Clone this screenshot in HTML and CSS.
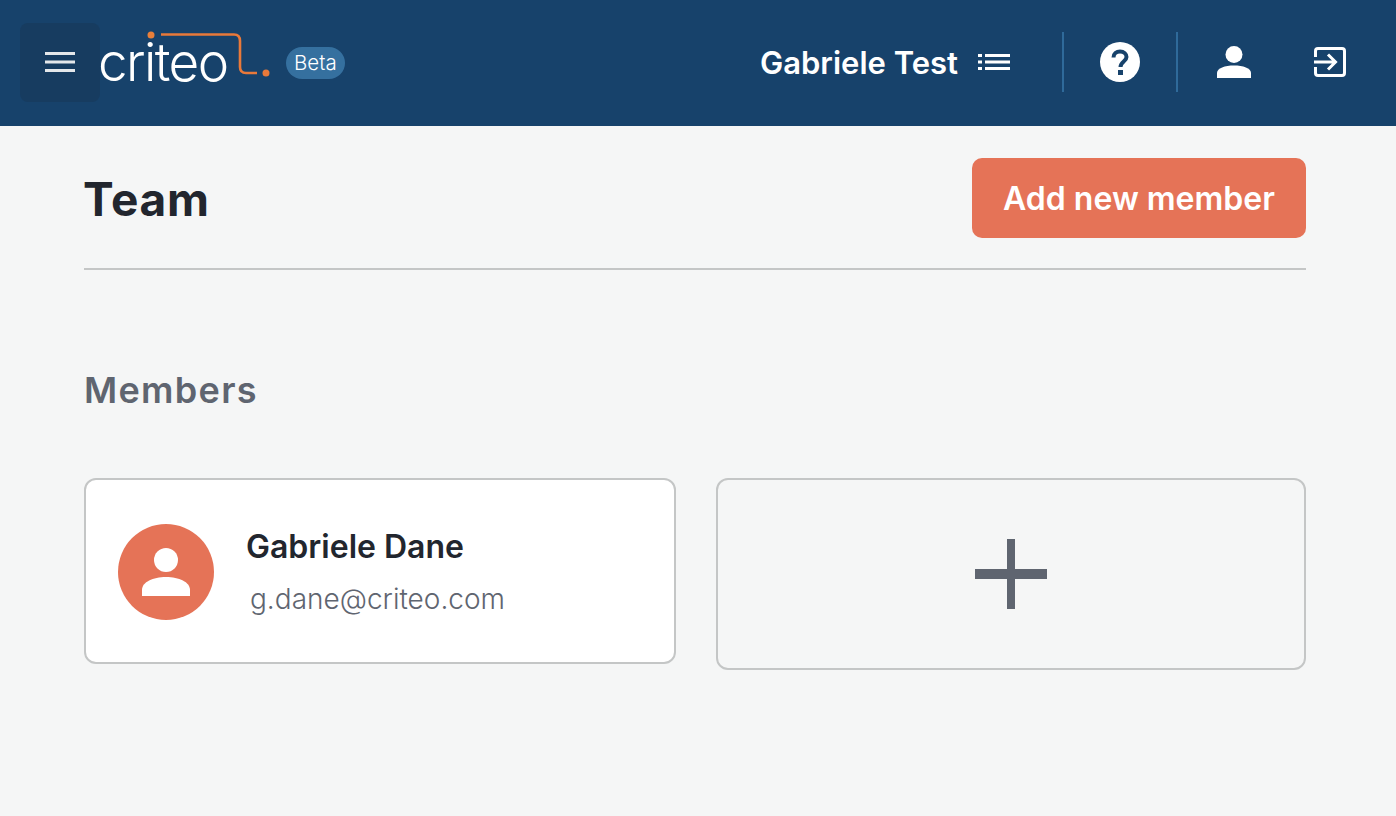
FILE: index.html
```html
<!DOCTYPE html>
<html lang="en">

<head>
    <meta charset="UTF-8">
    <meta name="viewport" content="width=device-width, initial-scale=1.0">
    <title>Team</title>
    <link rel="stylesheet" href="styles.css">
</head>

<body>

    <header class="topbar">
        <div class="brand">
            <button class="menu-button" aria-label="Menu">
                <svg width="30" height="20" viewBox="0 0 30 20" fill="#e4e7ea">
                    <rect x="0" y="0" width="30" height="3"></rect>
                    <rect x="0" y="8.5" width="30" height="3"></rect>
                    <rect x="0" y="17" width="30" height="3"></rect>
                </svg>
            </button>
            <div class="logo">
                <span class="logo-text">criteo</span>
                <svg class="logo-mark" width="176" height="50" viewBox="0 0 176 50" fill="none">
                    <circle cx="51" cy="4" r="3.5" fill="#e97f3a"></circle>
                    <path d="M61 3.5H134Q140 3.500 140 10V36Q140 42 146 42H157" stroke="#e9793a" stroke-width="2.6"></path>
                    <circle cx="166" cy="42" r="3.5" fill="#e9793a"></circle>
                </svg>
            </div>
            <span class="beta">Beta</span>
        </div>
        <div class="user-menu">
            <span class="account-name">Gabriele Test</span>
            <svg class="list-icon" width="32" height="18" viewBox="0 0 32 18" fill="#fff">
                <rect x="0" y="1" width="4" height="3"></rect>
                <rect x="0" y="7.5" width="4" height="3"></rect>
                <rect x="0" y="14" width="4" height="3"></rect>
                <rect x="7" y="1" width="25" height="3"></rect>
                <rect x="7" y="7.5" width="25" height="3"></rect>
                <rect x="7" y="14" width="25" height="3"></rect>
            </svg>
            <span class="sep sep-first"></span>
            <svg class="help-icon" width="40" height="40" viewBox="0 0 40 40">
                <circle cx="20" cy="20" r="20" fill="#fff"></circle>
                <path d="M13.5 15.5C13.5 11.5 16.5 9.5 20 9.5C24 9.5 26.5 12 26.5 15C26.5 19.5 20.5 19.5 20.5 25" fill="none" stroke="#17426b" stroke-width="4"></path>
                <rect x="18" y="28" width="5" height="5" fill="#17426b"></rect>
            </svg>
            <span class="sep sep-second"></span>
            <svg class="person-icon" width="34" height="32" viewBox="0 0 34 32" fill="#fff">
                <circle cx="17" cy="8.5" r="8.5"></circle>
                <path d="M0 32V27C0 22 8 19.5 17 19.5C26 19.5 34 22 34 27V32Z"></path>
            </svg>
            <svg class="exit-icon" width="32" height="30" viewBox="0 0 32 30" fill="none" stroke="#fff" stroke-width="3">
                <path d="M1.5 10V4Q1.5 1.5 4 1.5H28Q30.500 1.5 30.500 4V26Q30.500 28.500 28 28.500H4Q1.500 28.500 1.500 26V20"></path>
                <path d="M0 15H21M14 7.500L21.500 15L14 22.500"></path>
            </svg>
        </div>
    </header>

    <main class="content">
        <div class="page-head">
            <h1>Team</h1>
            <button class="add-button">Add new member</button>
        </div>

        <h2>Members</h2>

        <div class="members">
            <div class="member-card">
                <div class="avatar">
                    <svg width="48" height="48" viewBox="0 0 48 48" fill="#fff">
                        <circle cx="24" cy="12" r="12"></circle>
                        <path d="M0 48V42C0 34 11 29 24 29C37 29 48 34 48 42V48Z"></path>
                    </svg>
                </div>
                <div class="member-info">
                    <div class="member-name">Gabriele Dane</div>
                    <div class="member-email">g.dane@criteo.com</div>
                </div>
            </div>
            <div class="add-card">
                <svg width="72" height="70" viewBox="0 0 72 70" fill="#5f6570">
                    <rect x="0" y="30" width="72" height="10"></rect>
                    <rect x="32" y="0" width="8" height="70"></rect>
                </svg>
            </div>
        </div>
    </main>

</body>

</html>
```

FILE: styles.css
```css
body {
    font-family: Inter, "Open Sans", sans-serif;
    margin: 0;
    padding: 0;
    background: #f5f6f6;
    color: #22262e;
}

.topbar {
    height: 126px;
    background: #17426b;
    display: flex;
    justify-content: space-between;
    align-items: center;
    padding: 0 50px 0 20px;
    box-sizing: border-box;
}

.brand {
    display: flex;
    align-items: center;
    height: 100%;
}

.menu-button {
    width: 80px;
    height: 79px;
    margin-top: -2px;
    border: none;
    border-radius: 8px;
    background: #173c60;
    display: flex;
    align-items: center;
    justify-content: center;
    padding: 0;
}

.logo {
    position: relative;
    width: 186px;
    height: 60px;
    margin-top: -2px;
}

.logo-text {
    color: #fff;
    font-size: 53px;
    font-weight: 350;
    line-height: 60px;
    letter-spacing: -1.6px;
    margin-left: -2px;
    display: block;
}

.logo-mark {
    position: absolute;
    left: 0;
    top: -1px;
}

.beta {
    background: #35709f;
    color: #fff;
    font-size: 20.500px;
    font-weight: 300;
    line-height: 32px;
    padding: 0 8px;
    border-radius: 16px;
}

.user-menu {
    display: flex;
    align-items: center;
    margin-top: -2px;
}

.account-name {
    color: #fff;
    font-size: 31px;
    font-weight: 600;
    margin-right: 20px;
}

.sep {
    width: 2px;
    height: 60px;
    background: #2f6a9a;
}

.sep-first {
    margin: 0 36px 0 52px;
}

.sep-second {
    margin: 0 39px 0 36px;
}

.exit-icon {
    margin-left: 63px;
}

.content {
    padding: 32px 90px 0 84px;
}

.page-head {
    display: flex;
    justify-content: space-between;
    align-items: center;
    padding-bottom: 30px;
    border-bottom: 2px solid #c4c6c6;
}

h1 {
    margin: 1px 0 0 -1px;
    font-size: 46px;
    font-weight: 700;
    letter-spacing: 0.8px;
}

.add-button {
    width: 334px;
    height: 80px;
    background: #e57357;
    color: #fff;
    border: none;
    border-radius: 10px;
    font-family: inherit;
    font-size: 32px;
    font-weight: 600;
    padding: 0;
}

h2 {
    margin: 98px 0 66px;
    font-size: 36px;
    line-height: 44px;
    font-weight: 600;
    letter-spacing: 1.3px;
    color: #5f6570;
}

.members {
    display: grid;
    grid-template-columns: 592px 590px;
    gap: 40px;
    align-items: start;
}

.member-card {
    height: 186px;
    box-sizing: border-box;
    background: #fff;
    border: 2px solid #c4c6c6;
    border-radius: 12px;
    display: flex;
    align-items: center;
    padding-left: 32px;
}

.avatar {
    width: 96px;
    height: 96px;
    margin-top: 2px;
    border-radius: 50%;
    background: #e57357;
    display: flex;
    align-items: center;
    justify-content: center;
}

.member-info {
    margin: 2px 0 0 33px;
}

.member-name {
    font-size: 32px;
    font-weight: 600;
    line-height: 40px;
    margin-left: -1px;
}

.member-email {
    font-size: 28px;
    font-weight: 300;
    line-height: 36px;
    color: #5f6570;
    margin: 14px 0 0 3px;
}

.add-card {
    height: 192px;
    box-sizing: border-box;
    border: 2px solid #c4c6c6;
    border-radius: 12px;
    display: flex;
    align-items: center;
    justify-content: center;
}
```
